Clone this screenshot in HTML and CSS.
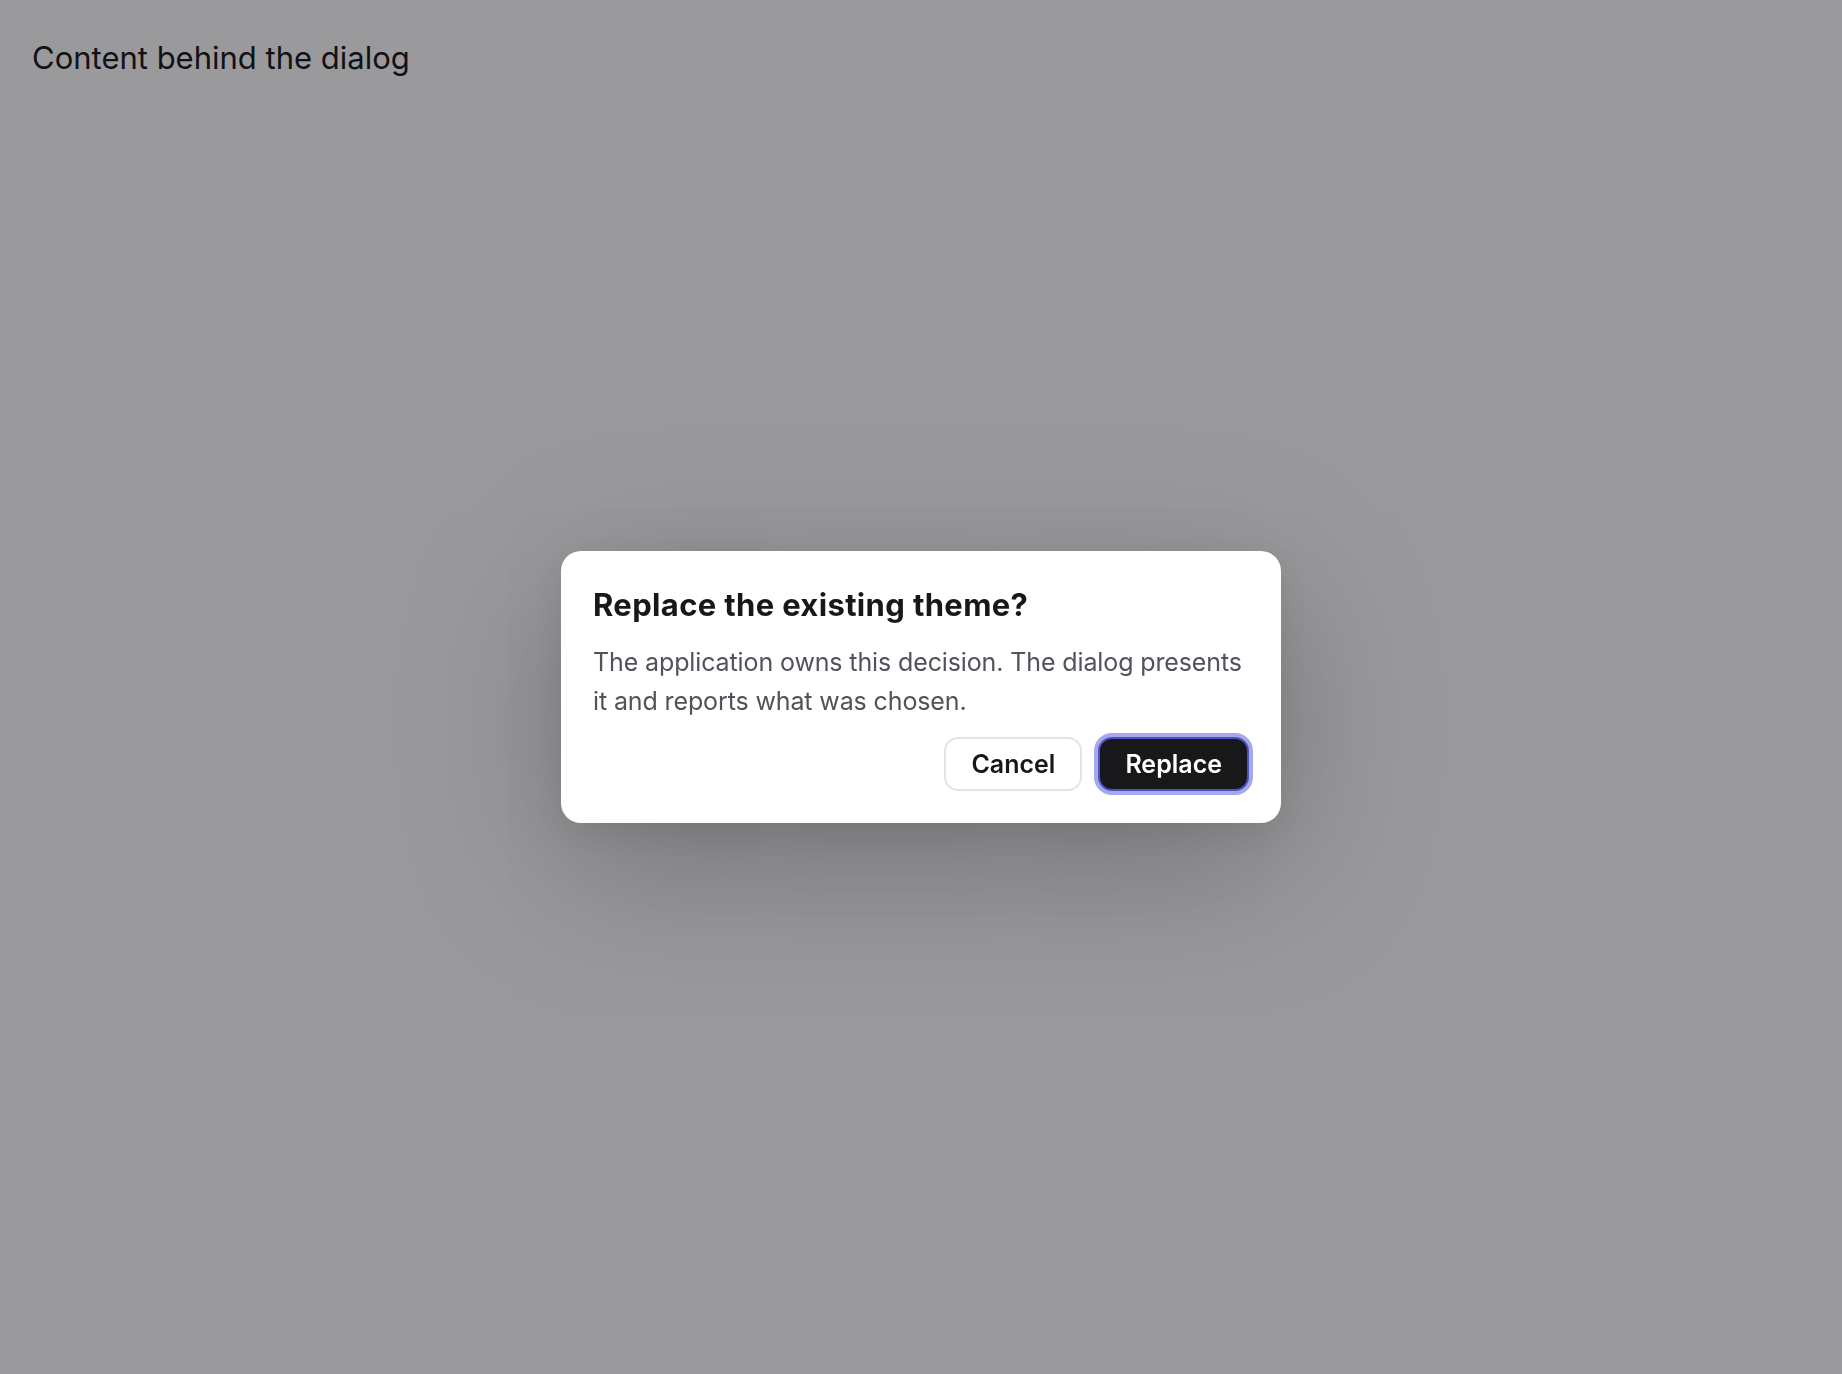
FILE: index.html
```html
<!DOCTYPE html>
<html lang="en">
<head>
<meta charset="utf-8">
<title>Dialog</title>
<link rel="stylesheet" href="styles.css">
</head>
<body>
<main class="page">
  <p class="page-text">Content behind the dialog</p>
</main>
<div class="overlay">
  <div class="dialog" role="alertdialog" aria-labelledby="dlg-title" aria-describedby="dlg-desc">
    <h2 class="dialog-title" id="dlg-title">Replace the existing theme?</h2>
    <p class="dialog-desc" id="dlg-desc">The application owns this decision. The dialog presents it and reports what was chosen.</p>
    <div class="dialog-actions">
      <button class="btn btn-secondary" type="button">Cancel</button>
      <button class="btn btn-primary is-focused" type="button">Replace</button>
    </div>
  </div>
</div>
</body>
</html>
```
FILE: styles.css
```css
* { box-sizing: border-box; }
html, body { margin: 0; padding: 0; }
body {
  background: #ffffff;
  font-family: Inter, "Noto Sans", "Liberation Sans", sans-serif;
  color: #18181b;
  width: 1842px;
  height: 1374px;
  overflow: hidden;
}
.page {
  padding: 34px 32px;
}
.page-text {
  margin: 0;
  font-size: 31px;
  line-height: 48px;
  color: #18181b;
}
.overlay {
  position: fixed;
  inset: 0;
  background: rgba(10, 10, 16, 0.41);
  display: flex;
  align-items: center;
  justify-content: center;
}
.dialog {
  width: 720px;
  background: #ffffff;
  border-radius: 20px;
  padding: 32px;
  display: flex;
  flex-direction: column;
  gap: 16px;
  box-shadow: 0 40px 160px rgba(0, 0, 0, 0.26), 0 10px 30px rgba(0, 0, 0, 0.07);
}
.dialog-title {
  margin: 0;
  font-size: 31px;
  line-height: 44px;
  font-weight: 700;
  letter-spacing: 0.35px;
  color: #18181b;
}
.dialog-desc {
  margin: 0;
  font-size: 25px;
  line-height: 39px;
  letter-spacing: -0.12px;
  color: #52525b;
}
.dialog-actions {
  display: flex;
  justify-content: flex-end;
  gap: 16px;
}
.btn {
  font-family: inherit;
  font-size: 25px;
  line-height: 30px;
  font-weight: 600;
  padding: 10px 25px;
  border-radius: 14px;
  border: 2px solid transparent;
  cursor: pointer;
}
.btn-secondary {
  background: #ffffff;
  color: #18181b;
  border-color: #e4e4e7;
}
.btn-primary {
  background: #18181b;
  color: #ffffff;
  border-color: #18181b;
}
.btn-primary.is-focused {
  border-color: #4c50c6;
  box-shadow: 0 0 0 4px #a6a8ea;
}
```
